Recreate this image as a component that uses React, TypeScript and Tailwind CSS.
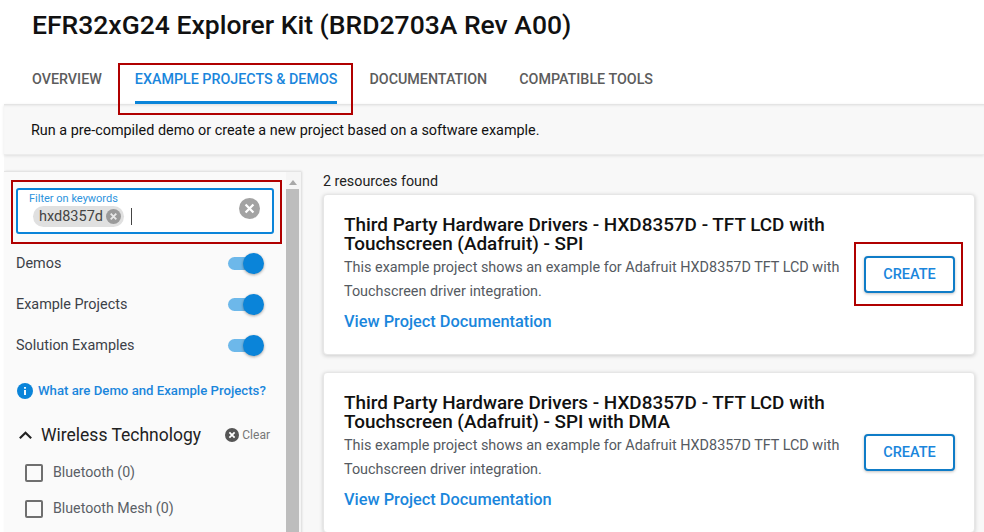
import React from 'react';

const RedBox: React.FC<{ className: string }> = ({ className }) => (
  <div className={`absolute border-2 border-[#b00000] pointer-events-none ${className}`} />
);

const Toggle: React.FC<{ label: string }> = ({ label }) => (
  <div className="flex items-center justify-between h-[41px] pl-3 pr-[23px]">
    <span className="text-[14.4px] text-[#3c4148]">{label}</span>
    <div className="relative w-[35px] h-[13px] rounded-full bg-[#6db8ea]">
      <div className="absolute right-[-1px] top-[-4px] w-[21px] h-[21px] rounded-full bg-[#0a84d9] shadow-[0_1px_3px_rgba(0,0,0,0.35)]" />
    </div>
  </div>
);

const Check: React.FC<{ label: string }> = ({ label }) => (
  <div className="flex items-center h-9 pl-[21px] gap-[10px]">
    <div className="w-[18px] h-[18px] rounded-[2px] border-2 border-[#6f6f6f]" />
    <span className="text-[14.2px] text-[#5a5f66]">{label}</span>
  </div>
);

const Card: React.FC<{ title: string; className?: string }> = ({ title, className = '' }) => (
  <div className={`flex items-center bg-white rounded-[4px] border border-[#e6e6e6] shadow-[0_1px_4px_rgba(0,0,0,0.18)] pl-5 pr-[19px] ${className}`}>
    <div className="w-[519px] shrink-0 self-start pt-5">
      <h3 className="text-[18.9px] font-medium leading-[19px] text-[#111]">{title}</h3>
      <p className="text-[14.4px] leading-6 text-[#555a61] mt-[3px]">
        This example project shows an example for Adafruit HXD8357D TFT LCD with Touchscreen driver integration.
      </p>
      <a className="block text-[16.35px] font-medium text-[#1a86dc] mt-[6px]">View Project Documentation</a>
    </div>
    <button className="ml-auto self-start w-[91px] h-[37px] rounded-[4px] border-2 border-[#0f7cc7] bg-white text-[14.5px] font-medium text-[#1a86dc] shadow-[0_1px_3px_rgba(0,0,0,0.25)] mt-[61px]">
      CREATE
    </button>
  </div>
);

export default function App() {
  return (
    <div className="relative w-[984px] h-[532px] overflow-hidden bg-white font-['Roboto',sans-serif]">
      <h1 className="h-[54px] pl-8 pt-[5px] text-[26.5px] leading-[40px] font-medium text-[#111]">
        EFR32xG24 Explorer Kit (BRD2703A Rev A00)
      </h1>

      <nav className="flex h-[50px] pl-8 pt-[13px] text-[14.3px] font-medium text-[#5c5c5c]">
        <span className="leading-[24px]">OVERVIEW</span>
        <span className="ml-[33px] h-[37px] leading-[24px] text-[#1a86dc] border-b-[3px] border-[#0a84d9]">EXAMPLE PROJECTS &amp; DEMOS</span>
        <span className="ml-[32px] leading-[24px]">DOCUMENTATION</span>
        <span className="ml-[32px] leading-[24px]">COMPATIBLE TOOLS</span>
      </nav>

      <div className="ml-1 h-[428px] bg-[#f8f8f8]">
        <div className="h-[51px] pl-[27px] pt-[4px] flex items-center text-[14.4px] text-[#111] border-b border-[#ececec] shadow-[0_1px_3px_rgba(0,0,0,0.1),inset_0_3px_3px_-2px_rgba(0,0,0,0.12)]">
          Run a pre-compiled demo or create a new project based on a software example.
        </div>

        <div className="flex pt-4">
          <aside className="relative w-[297px] h-[370px] shrink-0 bg-[#fafafa] border-t border-[#e4e4e4] shadow-[1px_0_2px_rgba(0,0,0,0.12)] overflow-hidden">
            <div className="w-[282px]">
              <div className="mx-3 mt-[16px] relative h-[46px] w-[258px] rounded-[3px] border-2 border-[#0a84d9] bg-white">
                <span className="absolute left-[11px] top-[2px] text-[11px] leading-[14px] text-[#2c93dd]">Filter on keywords</span>
                <div className="absolute left-[15px] top-[16px] flex items-center h-[21px] w-[91px] pl-[6px] rounded-full bg-[#e0e0e0] text-[14.5px] text-[#444]">
                  hxd8357d
                  <svg viewBox="0 0 24 24" className="ml-[3px] w-[15px] h-[15px]">
                    <circle cx="12" cy="12" r="12" fill="#9a9a9a" />
                    <path d="M7.5 7.5l9 9M16.5 7.5l-9 9" stroke="#e8e8e8" strokeWidth="3" />
                  </svg>
                </div>
                <div className="absolute left-[113px] top-[18px] w-px h-[17px] bg-[#444]" />
                <svg viewBox="0 0 24 24" className="absolute right-[12px] top-[8px] w-[21px] h-[21px]">
                  <circle cx="12" cy="12" r="12" fill="#a3a3a3" />
                  <path d="M7.5 7.5l9 9M16.5 7.5l-9 9" stroke="#fff" strokeWidth="2.6" />
                </svg>
              </div>

              <div className="mt-[9px]">
                <Toggle label="Demos" />
                <Toggle label="Example Projects" />
                <Toggle label="Solution Examples" />
              </div>

              <div className="flex items-center pl-[13px] mt-[7px] h-9 text-[13.2px] font-medium text-[#1a86dc]">
                <svg viewBox="0 0 24 24" className="w-4 h-4 mr-[5px] shrink-0">
                  <circle cx="12" cy="12" r="12" fill="#0a84d9" />
                  <path d="M12 10.5v7.5M12 6v2.6" stroke="#fff" strokeWidth="2.8" />
                </svg>
                What are Demo and Example Projects?
              </div>

              <div className="flex items-center pl-[13px] pr-4 h-[46px] pt-[6px]">
                <svg viewBox="0 0 24 24" className="w-[17px] h-[17px] mr-[7px]" fill="none" stroke="#222" strokeWidth="3">
                  <path d="M4 16l8-8 8 8" />
                </svg>
                <span className="text-[17.5px] text-[#222]">Wireless Technology</span>
                <svg viewBox="0 0 24 24" className="ml-auto w-[14px] h-[14px] mr-[3px]">
                  <circle cx="12" cy="12" r="12" fill="#555" />
                  <path d="M7.5 7.5l9 9M16.5 7.5l-9 9" stroke="#fff" strokeWidth="3" />
                </svg>
                <span className="text-[12px] text-[#777]">Clear</span>
              </div>

              <Check label="Bluetooth (0)" />
              <Check label="Bluetooth Mesh (0)" />
            </div>

            <div className="absolute right-0 top-0 bottom-0 w-[15px] pr-[2px] bg-[#f5f5f5]">
              <div className="mx-auto mt-[8px] w-0 h-0 border-x-[4px] border-x-transparent border-b-[5px] border-b-[#a8a8a8]" />
              <div className="mt-[4px] h-[360px] bg-[#bdbdbd]" />
            </div>
          </aside>

          <main className="ml-[22px] w-[652px]">
            <div className="h-[23px] leading-[20px] text-[14.3px] text-[#222]">2 resources found</div>
            <Card className="h-[161px]" title="Third Party Hardware Drivers - HXD8357D - TFT LCD with Touchscreen (Adafruit) - SPI" />
            <Card className="h-[161px] mt-[17px]" title="Third Party Hardware Drivers - HXD8357D - TFT LCD with Touchscreen (Adafruit) - SPI with DMA" />
          </main>
        </div>
      </div>

      <RedBox className="left-[118px] top-[63px] w-[235px] h-[52px]" />
      <RedBox className="left-[11px] top-[180px] w-[271px] h-[64px]" />
      <RedBox className="left-[854px] top-[242px] w-[109px] h-[64px]" />
    </div>
  );
}
